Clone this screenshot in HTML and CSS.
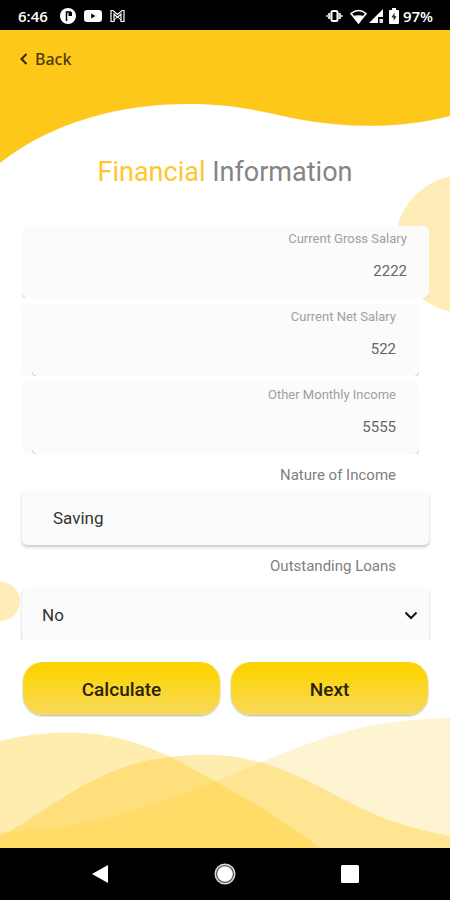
FILE: index.html
```html
<!DOCTYPE html>
<html lang="en">
<head>
<meta charset="utf-8">
<meta name="viewport" content="width=device-width, initial-scale=1">
<title>Financial Information</title>
<link rel="stylesheet" href="styles.css">
</head>
<body>
<header class="status">
  <div class="status-group">
    <span class="status-time">6:46</span>
    <svg class="icon-app" width="16" height="16" viewBox="0 0 16 16" aria-hidden="true"><circle cx="8" cy="8" r="8" fill="#fff"/><path d="M6.500 13V4H11" fill="none" stroke="#000" stroke-width="1.500"/><path d="M8.500 4H12V8H8.500Z" fill="#000"/></svg>
    <svg width="18" height="14" viewBox="0 0 18 14" aria-hidden="true"><rect y="1" width="18" height="12" rx="3" fill="#fff"/><path d="M7.200 4.500L11.500 7L7.200 9.500Z" fill="#000"/></svg>
    <svg width="15" height="14" viewBox="0 0 15 14" aria-hidden="true"><path d="M1 12.500V1.500H3L7.500 5.500L12 1.500H14V12.500H11V5L7.500 8.500L4 5V12.500Z" fill="none" stroke="#fff" stroke-width="1.200"/><path d="M4 11L7.500 8L11 11" fill="none" stroke="#fff"/></svg>
  </div>
  <div class="status-group status-right">
    <svg width="17" height="14" viewBox="0 0 17 14" aria-hidden="true"><rect x="5.500" y="2" width="6" height="10" rx="1.500" fill="none" stroke="#fff" stroke-width="2"/><path d="M3.300 4V10M13.700 4V10" stroke="#ddd" stroke-width="2.400"/><path d="M1.200 6V8M15.800 6V8" stroke="#bbb" stroke-width="2"/></svg>
    <svg class="icon-wifi" width="17" height="15" viewBox="0 0 17 15" aria-hidden="true"><path d="M1 4.500Q8.500-1.500 16 4.500L8.500 14Z" fill="none" stroke="#fff" stroke-width="1.600"/><path d="M3 7Q8.500 5.500 14 7L8.500 14Z" fill="#fff"/></svg>
    <svg width="15" height="15" viewBox="0 0 15 15" aria-hidden="true"><path d="M0 14L14 0V8H9V14Z" fill="#fff"/><path d="M10.500 10H14V14H10.500Z" fill="#ddd"/></svg>
    <svg class="icon-battery" width="10" height="16" viewBox="0 0 10 16" aria-hidden="true"><path d="M3 0H7V2H9Q10 2 10 3V15Q10 16 9 16H1Q0 16 0 15V3Q0 2 1 2H3Z" fill="#fff"/><path d="M5.500 4.500L2.500 9.500H4.700V13L7.500 8.300H5.500Z" fill="#222"/></svg>
    <span class="status-battery">97%</span>
  </div>
</header>

<main class="screen">
  <svg class="wave-top" viewBox="0 0 450 134" preserveAspectRatio="none" aria-hidden="true"><path d="M0 0H450V86C405 98 350 99 297 89C255 80 232 74 188 74C120 74 52 92 0 133Z" fill="#fec81a"/></svg>
  <svg class="wave-bottom" viewBox="0 0 450 130" preserveAspectRatio="none" aria-hidden="true">
    <g fill="#fec81a">
      <path d="M0 114C85 112 145 91 218 62C290 35 340 2 450 0V130H0Z" fill-opacity=".2"/>
      <path d="M0 23C75 5 130 17 180 44C230 71 275 96 320 130H0Z" fill-opacity=".35"/>
      <path d="M0 119C45 94 90 54 150 42C230 28 270 42 335 77C380 101 405 109 450 118V130H0Z" fill-opacity=".35"/>
    </g>
  </svg>
  <span class="bubble bubble-right"></span>
  <span class="bubble bubble-left"></span>

  <a class="back" href="#"><svg width="8" height="12" viewBox="0 0 8 12" aria-hidden="true"><path d="M6.500 1L1.500 6L6.500 11" fill="none" stroke="#2f2608" stroke-width="2"/></svg>Back</a>

  <h1 class="title"><span class="title-accent">Financial</span> Information</h1>

  <form class="form">
    <div class="fields">
      <div class="field field-wide">
        <label for="gross">Current Gross Salary</label>
        <input id="gross" type="text" inputmode="numeric" value="2222">
      </div>
      <div class="field">
        <label for="net">Current Net Salary</label>
        <input id="net" type="text" inputmode="numeric" value="522">
      </div>
      <div class="field">
        <label for="other">Other Monthly Income</label>
        <input id="other" type="text" inputmode="numeric" value="5555">
      </div>
      <label class="caption" for="nature">Nature of Income</label>
      <input class="box box-text" id="nature" type="text" value="Saving">
      <label class="caption caption-loans" for="loans">Outstanding Loans</label>
      <div class="picker">
        <select class="box" id="loans"><option>No</option><option>Yes</option></select>
        <svg class="chevron" width="14" height="9" viewBox="0 0 14 9" aria-hidden="true"><path d="M1.500 1.500L7 7L12.500 1.500" fill="none" stroke="#111" stroke-width="2"/></svg>
      </div>
    </div>
    <div class="actions">
      <button type="button">Calculate</button>
      <button type="submit">Next</button>
    </div>
  </form>
</main>

<nav class="system">
  <button type="button" aria-label="Go back"><svg width="16" height="18" viewBox="0 0 16 18"><path d="M0 9L16 0V18Z" fill="#fff"/></svg></button>
  <button type="button" aria-label="Home"><svg width="22" height="22" viewBox="0 0 22 22"><circle cx="11" cy="11" r="9.800" fill="#555" stroke="#ddd" stroke-width="1.400"/><circle cx="11" cy="11" r="7.800" fill="#fff"/></svg></button>
  <button type="button" aria-label="Recent apps"><svg width="18" height="18" viewBox="0 0 18 18"><rect width="18" height="18" rx="1.500" fill="#fff"/></svg></button>
</nav>
</body>
</html>
```
FILE: styles.css
```css
* {
  box-sizing: border-box;
}

body {
  margin: 0;
  height: 100vh;
  display: flex;
  flex-direction: column;
  background: #fff;
  font-family: Roboto, "Liberation Sans", sans-serif;
}

input,
select,
button {
  margin: 0;
  border: 0;
  font-family: inherit;
}

.status {
  flex: none;
  height: 30px;
  padding: 2px 17px 0 18px;
  display: flex;
  align-items: center;
  justify-content: space-between;
  background: #000;
  color: #fff;
  font: 600 15px/20px "Open Sans", sans-serif;
}

.status-group {
  display: flex;
  align-items: center;
  gap: 8px;
}

.status-time {
  margin-right: 4px;
}

.status-right {
  gap: 2px;
}

.icon-wifi {
  margin-left: 5px;
}

.icon-battery {
  margin: 0 2px 0 3px;
}

.screen {
  position: relative;
  flex: 1;
  min-height: 0;
  display: flex;
  flex-direction: column;
  overflow: hidden;
}

.wave-top,
.wave-bottom {
  position: absolute;
  left: 0;
  width: 100%;
}

.wave-top {
  top: 0;
  height: 134px;
}

.wave-bottom {
  bottom: 0;
  height: 130px;
}

.bubble {
  position: absolute;
  border-radius: 50%;
  background: #ffedb8;
}

.bubble-right {
  top: 145px;
  right: -83px;
  width: 138px;
  height: 138px;
}

.bubble-left {
  top: 552px;
  left: -19px;
  width: 39px;
  height: 39px;
}

.back {
  position: relative;
  align-self: flex-start;
  margin: 17px 0 0 20px;
  display: flex;
  align-items: center;
  gap: 7px;
  color: #4b3c0c;
  font: 500 16px/24px "Noto Sans", sans-serif;
  text-decoration: none;
}

.title {
  position: relative;
  margin: 81px 0 0;
  color: #858585;
  font-size: 27px;
  font-weight: 400;
  line-height: 40px;
  text-align: center;
}

.title-accent {
  color: #fec72e;
}

.form {
  position: relative;
  flex: 1;
  min-height: 0;
  margin-top: 33px;
  display: flex;
  flex-direction: column;
}

.fields {
  flex: 1;
  min-height: 0;
  padding: 1px 21px 0 22px;
  display: flex;
  flex-direction: column;
  overflow: hidden;
}

.field {
  position: relative;
  flex: none;
  height: 72px;
  margin: 0 10px 6px 0;
  padding-right: 23px;
  display: flex;
  flex-direction: column;
  border-radius: 6px;
  background: #fbfbfb;
}

.field-wide {
  margin-right: 0;
  padding-right: 22px;
}

.field::before,
.field::after {
  content: "";
  position: absolute;
  bottom: 0;
  width: 3px;
  height: 3px;
  border-bottom: 1px solid #ddd;
}

.field::before {
  left: 10px;
  border-left: 1px solid #ddd;
  border-bottom-left-radius: 3px;
}

.field::after {
  right: 0;
  border-right: 1px solid #ddd;
  border-bottom-right-radius: 3px;
}

.field-wide::before {
  left: 0;
}

.field label {
  padding-top: 3px;
  color: #a0a0a0;
  font-size: 13px;
  line-height: 20px;
  text-align: right;
}

.field input {
  width: 100%;
  height: 44px;
  padding: 0;
  background: transparent;
  color: #666;
  font-size: 15px;
  text-align: right;
}

.caption {
  flex: none;
  height: 30px;
  padding-right: 33px;
  color: #808080;
  font-size: 15px;
  line-height: 30px;
  text-align: right;
}

.caption-loans {
  height: 42px;
  line-height: 43px;
}

.box {
  flex: none;
  width: 100%;
  height: 55px;
  padding: 0 20px;
  appearance: none;
  border-radius: 5px;
  background: #fbfbfb;
  box-shadow: 0 2px 3px rgba(0, 0, 0, 0.22);
  color: #333;
  font-size: 17px;
}

.box-text {
  padding: 0 31px;
}

.picker {
  position: relative;
  flex: none;
}

.chevron {
  position: absolute;
  top: 24px;
  right: 11px;
  pointer-events: none;
}

.actions {
  flex: none;
  padding: 22px 22px 133px 23px;
  display: flex;
  gap: 11px;
}

.actions button {
  flex: 1;
  height: 53px;
  padding: 2px 0 0;
  border-radius: 20px;
  background: linear-gradient(#fcd405 15%, #f8d95c);
  box-shadow: 0 1px 2px rgba(0, 0, 0, 0.3);
  color: #2a2306;
  font-size: 19px;
  font-weight: 500;
}

.system {
  flex: none;
  height: 52px;
  padding: 0 37px;
  display: flex;
  align-items: center;
  background: #000;
}

.system button {
  flex: 1;
  height: 52px;
  padding: 0;
  display: flex;
  align-items: center;
  justify-content: center;
  background: none;
}
```
